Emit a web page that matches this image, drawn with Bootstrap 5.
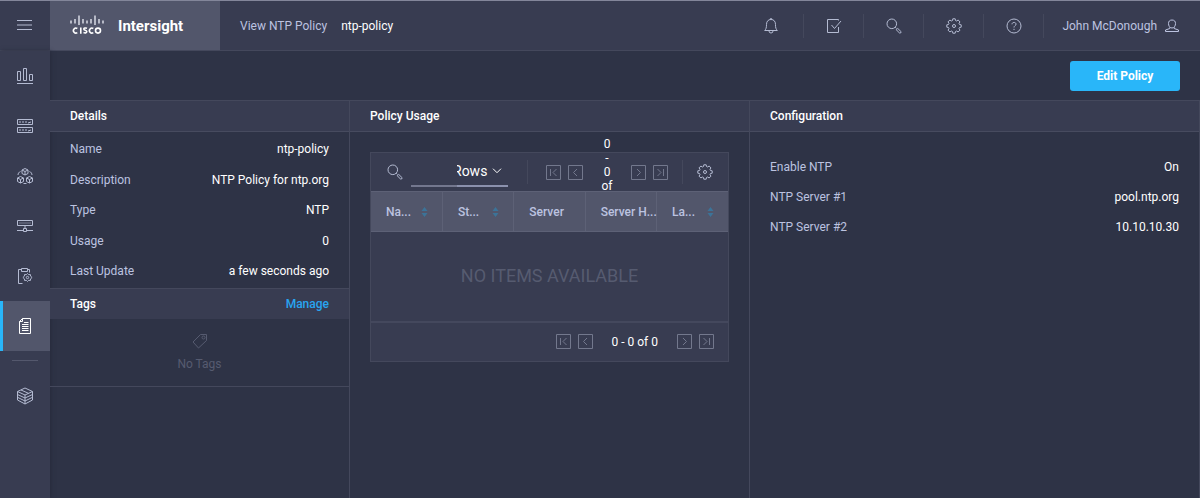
<!DOCTYPE html>
<html lang="en" data-bs-theme="dark">
<head>
<meta charset="utf-8">
<meta name="viewport" content="width=device-width, initial-scale=1">
<title>Intersight - View NTP Policy</title>
<link href="https://cdn.jsdelivr.net/npm/bootstrap@5.3.0/dist/css/bootstrap.min.css" rel="stylesheet">
<style>
  :root {
    --page: #2e3346;
    --panel: #383c51;
    --raised: #52566b;
    --line: #44485c;
    --label: #bcc3e0;
    --muted: #565b70;
    --icon: #b4bbd2;
    --accent: #29b6f9;
  }
  body { background: var(--page); color: #fff; font-family: Roboto, "Liberation Sans", sans-serif; font-size: 12px; line-height: 20px; }
  button { font: inherit; background: none; border: 0; padding: 0; color: inherit; }
  svg { display: block; fill: none; stroke: currentColor; stroke-width: 1; stroke-linejoin: round; }
  .topbar { height: 51px; background: var(--panel); border-top: 1px solid #83869a; border-bottom: 1px solid var(--line); }
  .menu-toggle { width: 50px; color: var(--icon); }
  .brand { width: 170px; background: var(--raised); gap: 13px; padding-left: 19px; }
  .brand-name { font-size: 15px; font-weight: 700; }
  .crumbs { gap: 14px; padding-left: 20px; }
  .tool { width: 60px; height: 24px; border-right: 1px solid var(--line); color: var(--icon); }
  .tool-first { width: 66px; }
  .label-text { color: var(--label); }
  .account { color: var(--label); padding: 0 20px 0 18px; gap: 7px; }
  .rail { width: 50px; background: var(--panel); color: var(--icon); box-shadow: 1px 0 4px #272b3c; }
  .rail-link { height: 50px; color: var(--icon); border-left: 3px solid transparent; padding-right: 4px; }
  .rail-link.active { background: var(--raised); border-left-color: var(--accent); color: #fff; }
  .rail-rule { margin: 9px 12px 10px; border-top: 1px solid #54586d; }
  .actions { height: 49px; padding: 0 20px; }
  .btn-edit { width: 110px; height: 30px; background: var(--accent); color: #fff; border-radius: 3px; font-weight: 700; }
  .panes { display: grid; grid-template-columns: 3fr 4fr 4.5fr; border-top: 1px solid var(--line); }
  .pane { border-right: 1px solid var(--line); }
  .pane-title { height: 31px; padding: 0 20px; background: var(--panel); border-bottom: 1px solid #474b5f; font-size: 12px; font-weight: 500; margin: 0; line-height: 20px; }
  .tags-title { border-top: 1px solid var(--line); border-bottom: 0; }
  .facts { min-height: 156px; padding: 7px 20px; margin: 0; }
  .facts dt, .settings dt { font-weight: 400; color: var(--label); }
  .facts dd, .settings dd { margin: 0; }
  .settings { padding: 20px 20px 0; margin: 0; line-height: 30px; }
  .manage { color: #28a5f0; text-decoration: none; }
  .no-tags { height: 68px; padding-top: 2px; color: var(--muted); border-bottom: 1px solid var(--line); gap: 5px; }
  .grid-box { margin: 20px; border: 1px solid var(--line); background: var(--panel); }
  .grid-tools { height: 38px; padding: 0 15px 0 16px; gap: 14px; color: #fff; }
  .find { width: 46px; height: 30px; margin-left: 8px; border: 0; border-bottom: 2px solid #73778e; background: none; outline: 0; }
  .rows { width: 51px; height: 30px; appearance: none; border: 0; border-bottom: 2px solid #8b91ad; padding: 0; text-indent: -4px; font: inherit; font-size: 14px; color: #fff; outline: 0; overflow: hidden;
    background: url("data:image/svg+xml,%3Csvg xmlns='http://www.w3.org/2000/svg' width='10' height='6' fill='none' stroke='%23fff'%3E%3Cpath d='M1 .7l4 4 4-4'/%3E%3C/svg%3E") no-repeat right 6px center; }
  .split { width: 1px; height: 24px; background: var(--line); }
  .pager { gap: 7px; }
  .page-btn { color: #73788d; }
  .vertical-count { width: 16px; margin: 0 9px; line-height: 14px; padding-bottom: 14px; text-align: center; }
  .page-count { margin: 0 12px; }
  .grid-table { table-layout: fixed; width: 100%; margin: 0; }
  .grid-table th { height: 40px; background: var(--raised); color: var(--label); font-weight: 500; padding: 0 0 0 15px; border: 1px solid #5d6176; border-left: 0; white-space: nowrap; }
  .grid-table th:last-child { border-right: 0; }
  .grid-table .empty { height: 89px; text-align: center; font-size: 18px; color: var(--muted); }
  .sort { margin-right: 14px; color: #3c7398; }
  .sort svg { fill: currentColor; stroke: none; }
  .grid-foot { height: 40px; border-top: 2px solid #44485d; padding: 0 14px; }
</style>
</head>
<body class="min-vh-100 d-flex flex-column">
<svg class="d-none">
  <symbol id="i-search" viewBox="0 0 16 16"><circle cx="5.8" cy="5.8" r="4.8"/><path d="M9.200 9.200l1.300 1.300M10.300 11.800l1.400-1.400 3.600 3.500-1.400 1.500z"/></symbol>
  <symbol id="i-gear" viewBox="0 0 16 16"><path d="M6.500 2.500L6.800.8h2.400l.3 1.700 1.200.5 1.400-1 1.900 1.900-1 1.400.5 1.200 1.700.3v2.400l-1.700.3-.5 1.200 1 1.400-1.900 1.900-1.400-1-1.200.5-.3 1.700H6.800l-.3-1.700-1.200-.5-1.400 1L2 12.100l1-1.400-.5-1.200L.8 9.200V6.800l1.700-.3L3 5.300 2 3.900 3.900 2l1.400 1z"/><circle cx="8" cy="8" r="1.500"/></symbol>
  <symbol id="i-first" viewBox="0 0 15 15"><path d="M.5.5h14v14H.5zM4.500 4v7M10.500 4L7 7.500l3.500 3.500"/></symbol>
  <symbol id="i-prev" viewBox="0 0 15 15"><path d="M.5.5h14v14H.5zM9 4L5.500 7.500 9 11"/></symbol>
  <symbol id="i-next" viewBox="0 0 15 15"><path d="M.5.5h14v14H.5zM6 4l3.500 3.500L6 11"/></symbol>
  <symbol id="i-last" viewBox="0 0 15 15"><path d="M.5.5h14v14H.5zM4.500 4L8 7.500 4.500 11M10.500 4v7"/></symbol>
  <symbol id="i-sort" viewBox="0 0 7 10"><path d="M3.500 0L6.500 4h-6zM3.500 10L6.500 6h-6z"/></symbol>
</svg>

<header class="topbar d-flex align-items-stretch">
  <button class="menu-toggle d-flex align-items-center justify-content-center" aria-label="Menu"><svg width="16" height="12"><path d="M0 .5h15M0 5h15M0 9.500h15"/></svg></button>
  <div class="brand d-flex align-items-center">
    <svg width="36" height="24" viewBox="0 0 36 24" role="img" aria-label="Cisco">
      <path d="M2 6.500v3M6 5v4.500M10 1.500v9.500M14 5v4.500M18 6.500v3M22 5v4.500M26 1.500v9.500M30 5v4.500M34 6.500v3" stroke="#d0d3de" stroke-width="1.600"/>
      <g stroke="#fff" stroke-width="1.600"><path d="M8.300 14.500a2.500 2.500 0 1 0 0 4.200M11.800 13.500v6.300M18 14.300c-1.500-.6-3.200-.4-3.200.7 0 1.500 3 .9 3 2.600 0 1.400-1.800 1.600-3.300 1M24.300 14.500a2.500 2.500 0 1 0 0 4.200"/><circle cx="29" cy="16.600" r="2.500"/></g>
    </svg>
    <span class="brand-name">Intersight</span>
  </div>
  <div class="crumbs d-flex align-items-center flex-grow-1"><span class="label-text">View NTP Policy</span><span>ntp-policy</span></div>
  <div class="d-flex align-items-center">
    <button class="tool tool-first d-flex align-items-center justify-content-center" aria-label="Alarms"><svg width="14" height="16"><path d="M.7 12.500h12.600C12 11 11.500 10 11.500 6.500 11.500 3 9.500 1.500 7 1.500S2.500 3 2.500 6.500C2.500 10 2 11 .7 12.500zM5 13a2 2 0 0 0 4 0M6 1.500a1 1 0 0 1 2 0"/></svg></button>
    <button class="tool d-flex align-items-center justify-content-center" aria-label="Tasks"><svg width="16" height="16"><path d="M12.500 2.500v-1h-11v13h11V9M5.500 7l3 3.500L15 3"/></svg></button>
    <button class="tool d-flex align-items-center justify-content-center" aria-label="Search"><svg width="16" height="16"><use href="#i-search"/></svg></button>
    <button class="tool d-flex align-items-center justify-content-center" aria-label="Settings"><svg width="16" height="16"><use href="#i-gear"/></svg></button>
    <button class="tool d-flex align-items-center justify-content-center" aria-label="Help"><svg width="16" height="16"><circle cx="8" cy="8" r="7"/><path d="M6 6.300C6 3.800 10 3.800 10 6.200 10 7.700 8 7.700 8 9.500M8 10.800v1.200"/></svg></button>
    <button class="account d-flex align-items-center">John McDonough
      <svg width="16" height="16"><path d="M8 2C5.500 2 4.500 3.500 4.500 5.500 4.500 7.500 5.500 10 8 10s3.500-2.500 3.500-4.500S10.500 2 8 2zM5.800 9.200v1.300L1.500 12v1.500h13V12l-4.300-1.500V9.200"/></svg></button>
  </div>
</header>

<div class="d-flex flex-grow-1">
  <nav class="rail flex-shrink-0" aria-label="Main">
    <a href="#" class="rail-link d-flex align-items-center justify-content-center" aria-label="Dashboard"><svg width="18" height="18"><path d="M1.500 4.500h3v9h-3zM7.500 1.500h3v12h-3zM13.500 7.500h3v6h-3zM1 16.500h16"/></svg></a>
    <a href="#" class="rail-link d-flex align-items-center justify-content-center" aria-label="Servers"><svg width="18" height="16"><path d="M1.500 1.500h15v5h-15zM1.500 9.500h15v5h-15z"/><path d="M3 4h8M3 12h8" stroke-dasharray="2 1"/><path d="M12 5l3-1M12 13l3-1"/></svg></a>
    <a href="#" class="rail-link d-flex align-items-center justify-content-center" aria-label="Clusters"><svg width="18" height="18"><path d="M9 1.500l3 1.500v3.500L9 8 6 6.500V3zM6 3l3 1.500L12 3M9 4.500V8M4.500 9.500l3 1.500v3.500l-3 1.500-3-1.500V11zM1.500 11l3 1.500 3-1.500M4.500 12.500V16M13.500 9.500l3 1.500v3.500l-3 1.500-3-1.500V11zM10.500 11l3 1.500 3-1.500M13.500 12.500V16M4.500 4.500C3 5 2 6.500 2 8M13.500 4.500C15 5 16 6.500 16 8M7.500 16.500h3"/></svg></a>
    <a href="#" class="rail-link d-flex align-items-center justify-content-center" aria-label="Fabric Interconnects"><svg width="18" height="14"><path d="M1.500 1.500h15v5h-15zM9 7v2M1 11.500h6M11 11.500h6"/><path d="M3.500 4h11" stroke-dasharray="1 1"/><rect x="7.500" y="9.500" width="3" height="3"/></svg></a>
    <a href="#" class="rail-link d-flex align-items-center justify-content-center" aria-label="Profiles"><svg width="16" height="18"><path d="M4.500 2.500h-3v14h4M10.500 2.500h2v3M4.500 1.500h6v3h-6z"/><path d="M10.500 6.500l1.200 1.200 1.700-.2.200 1.700 1.500 1.300-1.500 1.300-.2 1.700-1.700-.2-1.200 1.200-1.200-1.200-1.700.2-.2-1.700-1.500-1.300 1.500-1.300.2-1.700 1.700.2z"/><circle cx="10.500" cy="10.500" r="1.200"/></svg></a>
    <a href="#" class="rail-link active d-flex align-items-center justify-content-center" aria-label="Policies" aria-current="page"><svg width="14" height="18"><path d="M4.500 1.500h8v15h-11v-12zM4.500 1.500v3h-3M4 7.500h6.500M4 9.500h6.500M4 11.500h6.500M4 13.500h6.500M6 5.500h4.500"/></svg></a>
    <div class="rail-rule"></div>
    <a href="#" class="rail-link d-flex align-items-center justify-content-center" aria-label="Devices"><svg width="18" height="18"><path d="M9 1l7.500 3.500v8.500L9 17l-7.500-4V4.500zM1.500 4.500L9 8l7.500-3.500M9 8v9M1.500 7.500L9 11l7.500-3.500M1.500 10.300L9 14l7.500-3.700M5 3l7.500 3.300"/></svg></a>
  </nav>

  <main class="flex-grow-1 d-flex flex-column">
    <div class="actions d-flex align-items-center justify-content-end"><button class="btn-edit">Edit Policy</button></div>
    <div class="panes flex-grow-1">
      <section class="pane">
        <h2 class="pane-title d-flex align-items-center">Details</h2>
        <dl class="facts d-flex flex-column justify-content-between">
          <div class="d-flex justify-content-between"><dt>Name</dt><dd>ntp-policy</dd></div>
          <div class="d-flex justify-content-between"><dt>Description</dt><dd>NTP Policy for ntp.org</dd></div>
          <div class="d-flex justify-content-between"><dt>Type</dt><dd>NTP</dd></div>
          <div class="d-flex justify-content-between"><dt>Usage</dt><dd>0</dd></div>
          <div class="d-flex justify-content-between"><dt>Last Update</dt><dd>a few seconds ago</dd></div>
        </dl>
        <h2 class="pane-title tags-title d-flex align-items-center justify-content-between">Tags <a class="manage" href="#">Manage</a></h2>
        <div class="no-tags d-flex flex-column align-items-center justify-content-center">
          <svg width="16" height="16"><path d="M8.500 1.500h6v6l-8 7.500L1 9zM10 4.500a1.500 1.500 0 1 0 3 0 1.500 1.500 0 1 0-3 0"/></svg>
          <span>No Tags</span>
        </div>
      </section>

      <section class="pane">
        <h2 class="pane-title d-flex align-items-center">Policy Usage</h2>
        <div class="grid-box">
          <div class="grid-tools d-flex align-items-center">
            <div class="d-flex align-items-center me-auto">
              <svg width="16" height="16" color="#b4bbd2"><use href="#i-search"/></svg>
              <input class="find" type="text" aria-label="Search table">
              <select class="rows" aria-label="Rows per page"><option>Rows</option></select>
            </div>
            <div class="split me-1"></div>
            <div class="pager d-flex align-items-center">
              <button class="page-btn" aria-label="First page"><svg width="15" height="15"><use href="#i-first"/></svg></button>
              <button class="page-btn" aria-label="Previous page"><svg width="15" height="15"><use href="#i-prev"/></svg></button>
              <div class="vertical-count">0<br>-<br>0<br>of</div>
              <button class="page-btn" aria-label="Next page"><svg width="15" height="15"><use href="#i-next"/></svg></button>
              <button class="page-btn" aria-label="Last page"><svg width="15" height="15"><use href="#i-last"/></svg></button>
            </div>
            <div class="split"></div>
            <button aria-label="Table settings"><svg width="16" height="16" color="#b4bbd2"><use href="#i-gear"/></svg></button>
          </div>
          <table class="grid-table">
            <thead>
              <tr>
                <th scope="col"><div class="d-flex align-items-center justify-content-between">Na...<button class="sort" aria-label="Sort by name"><svg width="7" height="10"><use href="#i-sort"/></svg></button></div></th>
                <th scope="col"><div class="d-flex align-items-center justify-content-between">St...<button class="sort" aria-label="Sort by status"><svg width="7" height="10"><use href="#i-sort"/></svg></button></div></th>
                <th scope="col">Server</th>
                <th scope="col">Server H...</th>
                <th scope="col"><div class="d-flex align-items-center justify-content-between">La...<button class="sort" aria-label="Sort by last update"><svg width="7" height="10"><use href="#i-sort"/></svg></button></div></th>
              </tr>
            </thead>
            <tbody><tr><td class="empty" colspan="5">NO ITEMS AVAILABLE</td></tr></tbody>
          </table>
          <div class="grid-foot pager d-flex align-items-center justify-content-end">
            <button class="page-btn" aria-label="First page"><svg width="15" height="15"><use href="#i-first"/></svg></button>
            <button class="page-btn" aria-label="Previous page"><svg width="15" height="15"><use href="#i-prev"/></svg></button>
            <span class="page-count">0 - 0 of 0</span>
            <button class="page-btn" aria-label="Next page"><svg width="15" height="15"><use href="#i-next"/></svg></button>
            <button class="page-btn" aria-label="Last page"><svg width="15" height="15"><use href="#i-last"/></svg></button>
          </div>
        </div>
      </section>

      <section class="pane">
        <h2 class="pane-title d-flex align-items-center">Configuration</h2>
        <dl class="settings">
          <div class="d-flex justify-content-between"><dt>Enable NTP</dt><dd>On</dd></div>
          <div class="d-flex justify-content-between"><dt>NTP Server #1</dt><dd>pool.ntp.org</dd></div>
          <div class="d-flex justify-content-between"><dt>NTP Server #2</dt><dd>10.10.10.30</dd></div>
        </dl>
      </section>
    </div>
  </main>
</div>
<script src="https://cdn.jsdelivr.net/npm/bootstrap@5.3.0/dist/js/bootstrap.bundle.min.js"></script>
</body>
</html>
